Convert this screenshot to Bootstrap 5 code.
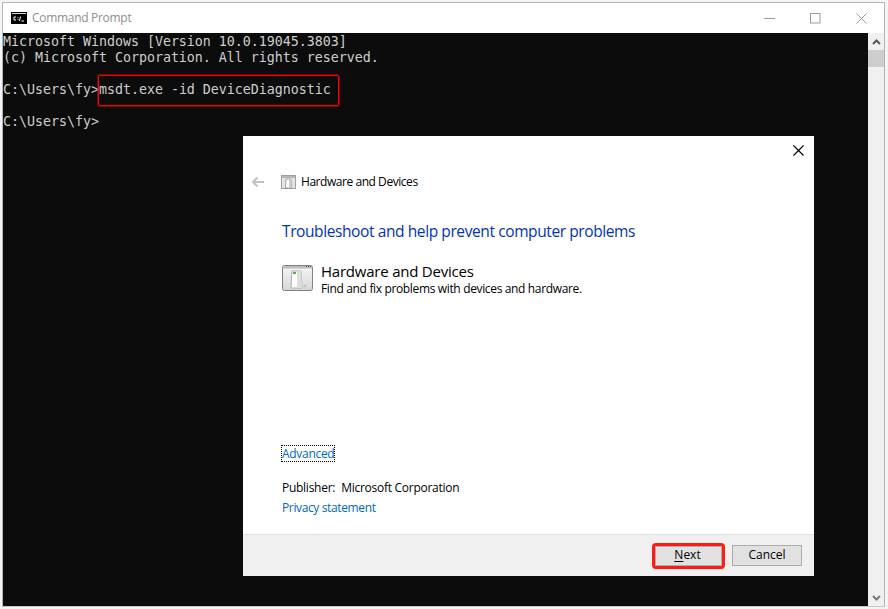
<!DOCTYPE html>
<html lang="en">
<head>
<meta charset="utf-8">
<title>Command Prompt</title>
<link href="https://cdn.jsdelivr.net/npm/bootstrap@5.3.0/dist/css/bootstrap.min.css" rel="stylesheet">
<style>
html,body{margin:0;height:609px;overflow:hidden;background:#f4f4f4;}
body{padding:2px 3px 2px 2px;font-family:"Open Sans","Noto Sans",sans-serif;}
.cmd-win{width:883px;height:605px;border:1px solid #b4b4b4;border-bottom-color:#c8c8c8;background:#fff;position:relative;}
.cmd-title{height:30px;padding-left:8px;gap:5px;font-size:12px;letter-spacing:-.3px;color:#8f8f8f;}
.win-ctl{gap:0;}
.win-ctl span{width:46px;height:30px;display:flex;align-items:center;justify-content:center;}
.cmd-main{height:573px;}
.cmd-console{width:865px;background:#0c0c0c;color:#cccccc;font:13.33px/16px "DejaVu Sans Mono","Liberation Mono",monospace;letter-spacing:-.03px;margin:0;white-space:pre;padding:1px 0 0;overflow:hidden;}
.cmd-hl{position:relative;}
.cmd-box{position:absolute;left:-1px;top:-7px;width:241px;height:31px;border:1px solid #ff0000;border-radius:2px;box-shadow:0 0 0 1px rgba(255,0,0,.45);}
.cmd-scroll{width:16px;background:#f0f0f0;}
.scroll-thumb{height:17px;background:#cdcdcd;}
.scroll-btn{height:17px;}
.dlg{position:absolute;left:240px;top:133px;width:571px;height:440px;background:#fff;color:#000;}
.dlg-close{height:29px;padding-right:10px;padding-top:9px;}
.dlg-nav{height:33px;padding-left:8px;font-size:12px;}
.dlg-nav .back{width:30px;}
.dlg-nav .ttl{margin-left:5px;letter-spacing:-.45px;}
.dlg-body{padding:0 39px;}
.dlg-head{font-size:15.5px;color:#0033bc;margin:21px 0 0;line-height:24px;font-weight:400;letter-spacing:-.4px;}
.dlg-item{margin-top:19px;gap:8px;}
.dlg-item svg{margin-top:3px;}
.item-t{font-size:15px;line-height:20px;letter-spacing:-.22px;margin-top:-1px;}
.item-d{font-size:12px;line-height:16px;letter-spacing:-.35px;}
.dlg-adv{font-size:12px;color:#0066cc;outline:1px dotted #000;line-height:15px;letter-spacing:-.3px;display:inline-block;text-decoration:none;}
.dlg-pub{font-size:12px;line-height:16px;margin-top:16px;letter-spacing:-.27px;}
.dlg-pub span{margin-right:6px;}
.dlg-priv{font-size:12px;line-height:16px;margin-top:4px;color:#0066cc;text-decoration:none;letter-spacing:-.37px;display:block;}
.dlg-bottom{padding-bottom:18px;}
.dlg-foot{height:42px;background:#f0f0f0;border-top:1px solid #dfdfdf;padding-right:12px;gap:10px;margin-top:auto;}
.dlg-btn{width:70px;height:21px;background:#e1e1e1;border:1px solid #adadad;border-radius:0;font-size:12px;line-height:15px;padding:0 0 2px;color:#000;}
.dlg-btn.nx{width:67px;height:20px;border-color:#adadad;outline:3px solid #ff1a14;outline-offset:0;border-radius:1px;padding-right:2px;}
.dlg-btn u{text-underline-offset:2px;}
</style>
</head>
<body>
<div class="cmd-win d-flex flex-column">
  <div class="cmd-title d-flex align-items-center flex-shrink-0">
    <svg width="16" height="12" viewBox="0 0 16 12"><rect width="16" height="12" fill="#000"/><rect x="1" y="1" width="14" height="1" fill="#d8d8d8"/><path d="M5 5H3V8H5M7 5v.8M7 7.200V8M9.500 4.500 8.500 9M10.500 9H13" stroke="#fff" stroke-width="1" fill="none"/></svg>
    <span>Command Prompt</span>
    <div class="win-ctl d-flex ms-auto">
      <span><svg width="11" height="11" viewBox="0 0 11 11"><path d="M0 5.500H11" stroke="#9a9a9a"/></svg></span>
      <span><svg width="11" height="11" viewBox="0 0 11 11"><rect x=".5" y=".5" width="9.500" height="9.500" fill="none" stroke="#9a9a9a"/></svg></span>
      <span><svg width="11" height="11" viewBox="0 0 11 11"><path d="M.5.5 10.500 10.500M10.500.5.5 10.500" stroke="#9a9a9a"/></svg></span>
    </div>
  </div>
  <div class="cmd-main d-flex flex-grow-1">
<pre class="cmd-console flex-shrink-0">Microsoft Windows [Version 10.0.19045.3803]
(c) Microsoft Corporation. All rights reserved.

C:\Users\fy&gt;<span class="cmd-hl">msdt.exe -id DeviceDiagnostic<span class="cmd-box"></span></span>

C:\Users\fy&gt;</pre>
    <div class="cmd-scroll d-flex flex-column flex-shrink-0">
      <div class="scroll-btn d-flex align-items-center justify-content-center"><svg width="9" height="6" viewBox="0 0 9 6"><path d="M1 5 4.500 1.500 8 5" stroke="#555" stroke-width="2" fill="none"/></svg></div>
      <div class="scroll-thumb"></div>
      <div class="scroll-btn d-flex align-items-center justify-content-center mt-auto"><svg width="9" height="6" viewBox="0 0 9 6"><path d="M1 1 4.500 4.500 8 1" stroke="#777" stroke-width="2" fill="none"/></svg></div>
    </div>
  </div>
  <div class="dlg d-flex flex-column">
    <div class="dlg-close d-flex justify-content-end align-items-start">
      <svg width="11" height="11" viewBox="0 0 11 11"><path d="M.5.5 10.500 10.500M10.500.5.5 10.500" stroke="#000" stroke-width="1.100"/></svg>
    </div>
    <div class="dlg-nav d-flex align-items-center">
      <span class="back d-flex"><svg width="14" height="12" viewBox="0 0 14 12"><path d="M13 6H2M6.500 1.500 2 6l4.500 4.500" stroke="#c2c2c2" stroke-width="2" fill="none"/></svg></span>
      <svg width="15" height="14" viewBox="0 0 15 14"><rect x=".5" y=".5" width="14" height="13" fill="#e4e4e4" stroke="#a0a0a0"/><rect x="1" y="1" width="13" height="2" fill="#b5b5b5"/><path d="M5 4h5l.5 9h-6z" fill="#fff" stroke="#8f8f8f" stroke-width=".8"/><path d="M8 4.500h2l.3 8H8z" fill="#cfcfcf"/></svg>
      <span class="ttl">Hardware and Devices</span>
    </div>
    <div class="dlg-body d-flex flex-column flex-grow-1">
      <h1 class="dlg-head">Troubleshoot and help prevent computer problems</h1>
      <div class="dlg-item d-flex">
        <svg width="31" height="26" viewBox="0 0 31 26" class="flex-shrink-0"><defs><linearGradient id="g" x1="0" y1="0" x2="0" y2="1"><stop offset="0" stop-color="#f7f7f7"/><stop offset="1" stop-color="#d6d6d6"/></linearGradient></defs><rect x=".5" y=".5" width="30" height="25" rx="2" fill="url(#g)" stroke="#808080"/><rect x="1" y="1" width="29" height="2.500" fill="#bdbdbd"/><path d="M24 1.500h1M26 1.500h1M28 1.500h1" stroke="#555"/><path d="M10 6h9l1 17H9z" fill="#fff" stroke="#b0b0b0"/><path d="M15 6h4l1 17h-5z" fill="#dedede"/><rect x="11" y="7" width="3" height="2" fill="#5db14a"/><path d="M21 22l3-3v3z" fill="#bbb"/></svg>
        <div>
          <div class="item-t">Hardware and Devices</div>
          <div class="item-d">Find and fix problems with devices and hardware.</div>
        </div>
      </div>
      <div class="mt-auto dlg-bottom">
        <a class="dlg-adv" href="#">Advanced</a>
        <div class="dlg-pub"><span>Publisher:</span>Microsoft Corporation</div>
        <a class="dlg-priv" href="#">Privacy statement</a>
      </div>
    </div>
    <div class="dlg-foot d-flex align-items-center justify-content-end flex-shrink-0">
      <button type="button" class="dlg-btn nx"><u>N</u>ext</button>
      <button type="button" class="dlg-btn">Cancel</button>
    </div>
  </div>
</div>
</body>
</html>
